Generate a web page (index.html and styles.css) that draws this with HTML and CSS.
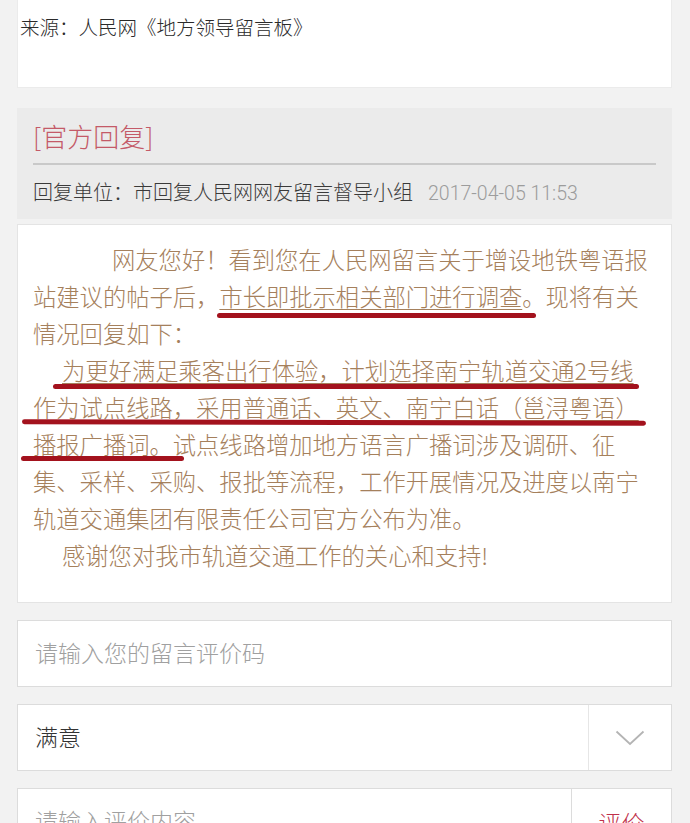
FILE: index.html
```html
<!DOCTYPE html>
<html>
<head>
    <meta charset="utf-8">
    <title>地方领导留言板</title>
    <link rel="stylesheet" href="styles.css">
</head>
<body>
    <div class="page">
        <div class="source-card">来源：人民网《地方领导留言板》</div>

        <div class="reply-head">
            <h2 class="reply-title">[官方回复]</h2>
            <div class="reply-meta">回复单位：市回复人民网网友留言督导小组<span class="reply-date">2017-04-05 11:53</span></div>
        </div>

        <div class="reply-body">
            <p class="para-first">网友您好！看到您在人民网留言关于增设地铁粤语报<br>站建议的帖子后，<u>市长即批示相关部门进行调查</u>。现将有关<br>情况回复如下：</p>
            <p class="para"><u>为更好满足乘客出行体验，计划选择南宁轨道交通2号线<br>作为试点线路，采用普通话、英文、南宁白话（邕浔粤语）<br>播报广播词</u>。试点线路增加地方语言广播词涉及调研、征<br>集、采样、采购、报批等流程，工作开展情况及进度以南宁<br>轨道交通集团有限责任公司官方公布为准。</p>
            <p class="para">感谢您对我市轨道交通工作的关心和支持!</p>

            <!-- red marker strokes drawn over the text -->
            <span class="mark mark-1"></span>
            <span class="mark mark-2"></span>
            <span class="mark mark-3"></span>
            <span class="mark mark-4"></span>
        </div>

        <div class="rate-form">
            <div class="field">
                <input type="text" class="field-input" placeholder="请输入您的留言评价码">
            </div>
            <div class="field">
                <div class="field-value">满意</div>
                <div class="field-arrow">
                    <svg width="30" height="16" viewBox="0 0 30 16">
                        <path d="M1.5 1.5 L15 14 L28.5 1.5" fill="none" stroke="#b4b4b4" stroke-width="1.8"/>
                    </svg>
                </div>
            </div>
            <div class="field">
                <input type="text" class="field-input" placeholder="请输入评价内容">
                <button type="button" class="field-btn">评价</button>
            </div>
        </div>
    </div>
</body>
</html>
```

FILE: styles.css
```css
body {
    margin: 0;
    background-color: #f2f2f2;
    font-family: "Noto Sans CJK SC", "Noto Sans", sans-serif;
    font-weight: 300;
    text-spacing-trim: space-all;
}
.page {
    padding: 0 18px 0 17px;
}
.source-card {
    height: 88px;
    box-sizing: border-box;
    padding: 14px 2px 0;
    background-color: #fff;
    border: 1px solid #ebebeb;
    border-top: none;
    font-size: 19.5px;
    line-height: 26px;
    color: #2a2a2a;
}
.reply-head {
    margin-top: 20px;
    padding: 11px 16px 12px;
    background-color: #ebebeb;
}
.reply-title {
    margin: 0;
    padding-bottom: 10px;
    border-bottom: 2px solid #c9c9c9;
    font-size: 26px;
    line-height: 34px;
    font-weight: 300;
    color: #c45a68;
}
.reply-meta {
    margin-top: 14px;
    font-size: 20px;
    line-height: 26px;
    color: #3a3a3a;
}
.reply-date {
    margin-left: 15px;
    font-family: Roboto, "Liberation Sans", sans-serif;
    font-size: 19.5px;
    color: #9c9c9c;
}
.reply-body {
    position: relative;
    margin-top: 5px;
    padding: 16px 10px 28px 15px;
    background-color: #fff;
    border: 1px solid #e4e4e4;
    font-size: 23.3px;
    line-height: 37px;
    color: #a5805c;
    white-space: nowrap;
}
.reply-body p {
    margin: 0;
}
.reply-body u {
    text-decoration-thickness: 1px;
    text-underline-offset: 3px;
}
.para-first {
    text-indent: 79px;
}
.para {
    text-indent: 29px;
}
.mark {
    position: absolute;
    height: 5px;
    border-radius: 3px;
    background-color: #a3121d;
}
.mark-1 {
    top: 88px;
    left: 199px;
    width: 319px;
}
.mark-2 {
    top: 159px;
    left: 35px;
    width: 586px;
}
.mark-3 {
    top: 195px;
    left: 4px;
    width: 624px;
    transform: rotate(0.15deg);
}
.mark-4 {
    top: 231px;
    left: 3px;
    width: 163px;
}
.rate-form {
    display: flex;
    flex-direction: column;
    gap: 17px;
    margin-top: 17px;
}
.field {
    display: flex;
    height: 67px;
    box-sizing: border-box;
    background-color: #fff;
    border: 1px solid #dcdcdc;
}
.field-input {
    flex: 1;
    min-width: 0;
    border: none;
    outline: none;
    padding: 0 17px 4px;
    background: transparent;
    font-family: "Noto Sans CJK SC", sans-serif;
    font-size: 23px;
    font-weight: 300;
    color: #333;
}
.field-input::placeholder {
    color: #a0a0a0;
}
.field-value {
    flex: 1;
    padding: 0 0 4px 17px;
    display: flex;
    align-items: center;
    font-size: 23px;
    color: #333;
}
.field-arrow {
    width: 82px;
    display: flex;
    align-items: center;
    justify-content: center;
    border-left: 1px solid #e6e6e6;
}
.field-btn {
    width: 100px;
    border: none;
    border-left: 1px solid #dcdcdc;
    background: #fff;
    font-family: "Noto Sans CJK SC", sans-serif;
    font-size: 23px;
    font-weight: 300;
    color: #c0304a;
    cursor: pointer;
}
```
